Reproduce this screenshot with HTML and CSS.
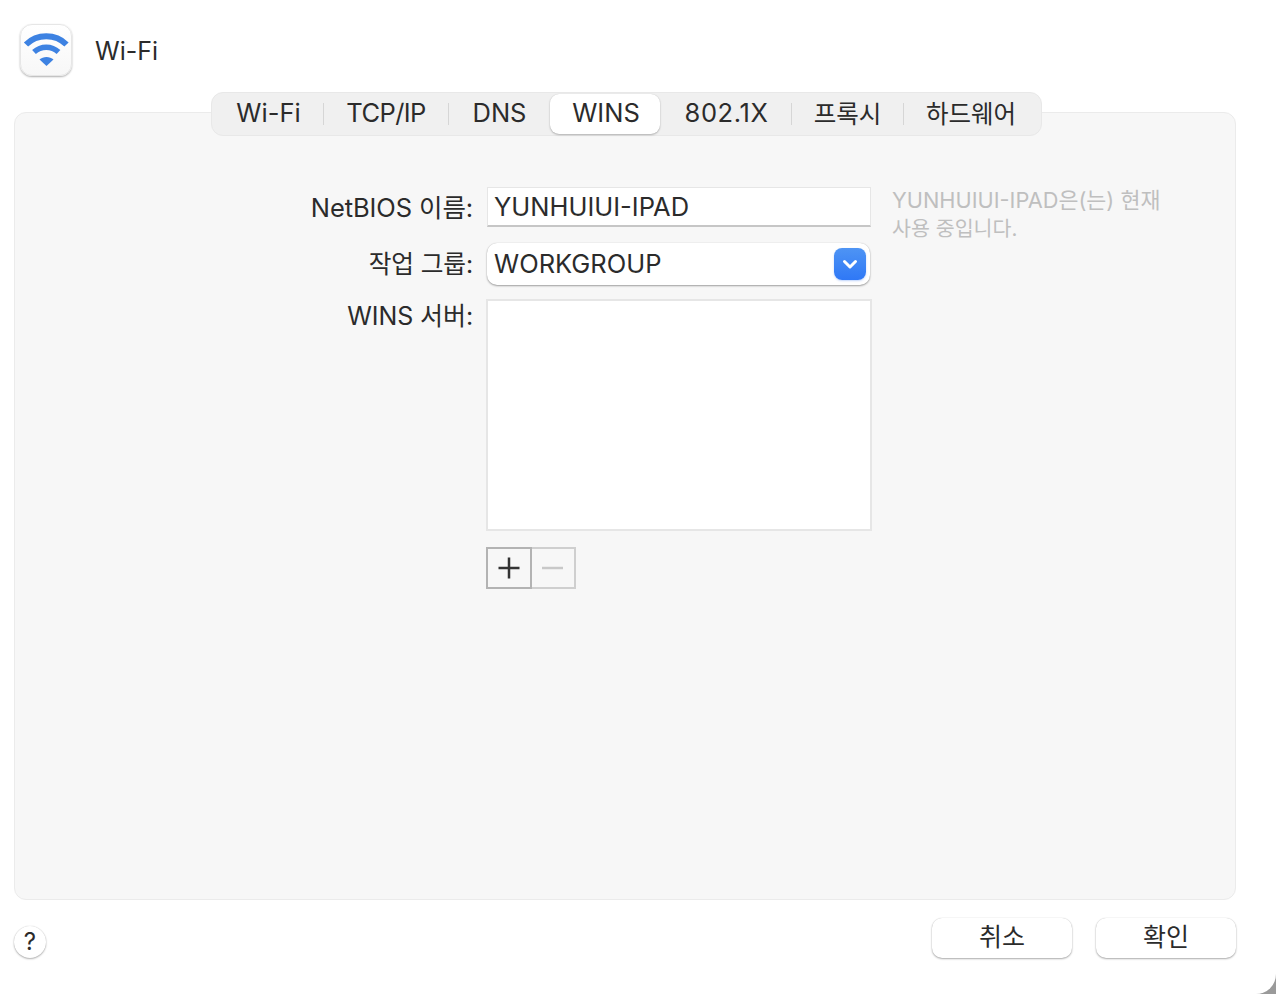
FILE: index.html
```html
<!DOCTYPE html>
<html lang="ko">
<head>
<meta charset="utf-8">
<title>Wi-Fi</title>
<link rel="stylesheet" href="styles.css">
</head>
<body>
<div class="window">
  <header class="header">
    <div class="app-icon">
      <svg width="52" height="52" viewBox="0 0 52 52">
        <path class="wifi-arc outer" d="M6 20.500C17 9.500 35.500 9.500 46.500 20.500"/>
        <path class="wifi-arc" d="M14 28C21 21.500 31.500 21.500 38.500 28"/>
        <path class="wifi-fill" d="M19.500 35.500C23 32 30 32 33.500 35.500L26.500 42Z"/>
      </svg>
    </div>
    <h1 class="title">Wi-Fi</h1>
  </header>
  <div class="tabs">
    <span class="tab t1">Wi-Fi</span><i class="sep"></i>
    <span class="tab t2">TCP/IP</span><i class="sep"></i>
    <span class="tab t3">DNS</span>
    <span class="tab t4 active">WINS</span>
    <span class="tab t5">802.1X</span><i class="sep"></i>
    <span class="tab t6">프록시</span><i class="sep"></i>
    <span class="tab t7">하드웨어</span>
  </div>
  <main class="panel">
    <div class="form">
      <label class="label">NetBIOS 이름:</label>
      <div class="field">YUNHUIUI-IPAD</div>
      <p class="hint">YUNHUIUI-IPAD은(는) 현재<br><span class="hint-2">사용 중입니다.</span></p>
      <label class="label l2">작업 그룹:</label>
      <div class="select">
        <span>WORKGROUP</span>
        <span class="chev"><svg width="32" height="32" viewBox="0 0 32 32"><path d="M10.500 13.500L16 19L21.500 13.500"/></svg></span>
      </div>
      <label class="label l3">WINS 서버:</label>
      <div class="list"></div>
      <div class="stepper">
        <span class="step plus"><svg width="42" height="38" viewBox="0 0 42 38"><path d="M10.500 19H31.500M21 8.500V29.500"/></svg></span>
        <span class="step minus"><svg width="42" height="38" viewBox="0 0 42 38"><path d="M10 19H31"/></svg></span>
      </div>
    </div>
  </main>
  <footer class="footer">
    <span class="help">?</span>
    <div class="actions">
      <span class="btn">취소</span>
      <span class="btn">확인</span>
    </div>
  </footer>
</div>
</body>
</html>
```
FILE: styles.css
```css
* { box-sizing: border-box; }
html, body { margin: 0; height: 994px; overflow: hidden; }
body {
  background: #9a9a9a;
  font-family: Inter, "Noto Sans CJK KR", sans-serif;
  color: #2b2b2b;
}
.window {
  width: 1276px;
  height: 994px;
  background: #fff;
  border-bottom-right-radius: 20px;
  display: flex;
  flex-direction: column;
  padding: 0 40px 0 14px;
}
.header {
  height: 92px;
  display: flex;
  align-items: flex-start;
  padding: 24px 0 0 6px;
  flex: none;
}
.app-icon {
  width: 52px;
  height: 52px;
  border-radius: 12px;
  background: linear-gradient(#fff, #f7f7f7);
  border: 1px solid #e6e6e6;
  box-shadow: 0 1px 2px rgba(0,0,0,.32);
  flex: none;
}
.app-icon svg { display: block; margin: -1px; }
.wifi-arc { fill: none; stroke: #3d82e2; stroke-width: 5.500; }
.wifi-arc.outer { stroke-width: 6; }
.wifi-fill { fill: #3d82e2; }
.title {
  margin: 10px 0 0 23px;
  font-size: 25px;
  line-height: 34px;
  font-weight: 400;
}
.tabs {
  flex: none;
  align-self: flex-start;
  margin-left: 197px;
  width: 831px;
  height: 44px;
  background: #f0f0f0;
  border: 1px solid #e8e8e8;
  border-radius: 12px;
  display: flex;
  align-items: center;
  position: relative;
  z-index: 1;
  font-size: 25.500px;
}
.tab {
  display: flex;
  align-items: center;
  justify-content: center;
  height: 40px;
  padding-bottom: 4px;
  white-space: nowrap;
  flex: none;
}
.t1 { width: 111px; padding-left: 2px; }
.t2 { width: 124px; letter-spacing: -.6px; }
.t3 { width: 101px; }
.t4 { width: 110px; padding-left: 2px; }
.t5 { width: 131px; letter-spacing: .6px; padding-left: 2px; }
.t6 { width: 111px; font-size: 24.500px; }
.t7 { width: 134px; font-size: 24.500px; }
.active {
  background: #fff;
  border-radius: 9px;
  box-shadow: 0 1px 2px rgba(0,0,0,.25), 0 0 1px rgba(0,0,0,.15);
}
.sep {
  width: 1px;
  height: 22px;
  background: #d6d6d6;
  flex: none;
}
.panel {
  flex: none;
  margin-top: -24px;
  height: 788px;
  width: 1222px;
  background: #f7f7f7;
  border: 1px solid #ebebeb;
  border-radius: 12px;
  padding-top: 74px;
}
.form {
  display: grid;
  grid-template-columns: 472px 384px 330px;
  grid-template-rows: 40px 42px 230px 42px;
  row-gap: 16px;
  font-size: 25.500px;
}
.label {
  grid-column: 1;
  text-align: right;
  padding: 1px 14px 0 0;
  line-height: 40px;
  letter-spacing: -.1px;
}
.l2 { font-size: 24.700px; }
.l3 { font-size: 25px; line-height: 28px; }
.field {
  grid-column: 2;
  background: #fff;
  border: 1px solid #e6e6e6;
  border-bottom: 2px solid #c6c6c6;
  padding-left: 6px;
  line-height: 37px;
}
.hint {
  grid-column: 3;
  margin: -1px 0 0 21px;
  font-size: 21.750px;
  line-height: 28px;
  color: #bfbfbf;
  white-space: nowrap;
}
.hint-2 { font-size: 20.600px; }
.select {
  grid-column: 2;
  width: 383px;
  background: #fff;
  border-radius: 10px;
  box-shadow: 0 1px 2px rgba(0,0,0,.35), 0 0 1px rgba(0,0,0,.2);
  display: flex;
  align-items: center;
  justify-content: space-between;
  padding: 0 4px 0 7px;
  line-height: 40px;
}
.chev {
  width: 32px;
  height: 32px;
  border-radius: 8px;
  background: linear-gradient(#4e94f4, #2f78f6);
  box-shadow: 0 1px 2px rgba(40,110,240,.3);
  flex: none;
}
.chev svg { display: block; }
.chev path { fill: none; stroke: #fff; stroke-width: 3; stroke-linecap: round; stroke-linejoin: round; }
.list {
  grid-column: 2;
  margin: -2px -1px 0 -1px;
  height: 232px;
  background: #fff;
  border: 2px solid #e6e6e6;
}
.stepper {
  grid-column: 2;
  display: flex;
  height: 42px;
  width: 90px;
  margin: 0 0 0 -1px;
}
.step {
  width: 46px;
  height: 42px;
  border: 2px solid #cfcfcf;
  display: block;
  flex: none;
}
.step svg { display: block; }
.plus { border-color: #b3b3b3; position: relative; z-index: 1; }
.plus path { fill: none; stroke: #333; stroke-width: 2.500; }
.minus { margin-left: -2px; }
.minus path { fill: none; stroke: #c8c8c8; stroke-width: 2.500; }
.footer {
  flex: none;
  display: flex;
  justify-content: space-between;
  align-items: flex-start;
  width: 1222px;
  padding-top: 18px;
}
.help {
  width: 32px;
  height: 32px;
  margin-top: 8px;
  border-radius: 50%;
  background: #fff;
  box-shadow: 0 1px 2px rgba(0,0,0,.3), 0 0 1px rgba(0,0,0,.2);
  text-align: center;
  font-size: 24px;
  font-weight: 400;
  line-height: 32px;
}
.actions { display: flex; gap: 24px; }
.btn {
  width: 140px;
  height: 40px;
  border-radius: 10px;
  background: #fff;
  box-shadow: 0 1px 2px rgba(0,0,0,.32), 0 0 1px rgba(0,0,0,.2);
  text-align: center;
  font-size: 25px;
  line-height: 38px;
}
```
